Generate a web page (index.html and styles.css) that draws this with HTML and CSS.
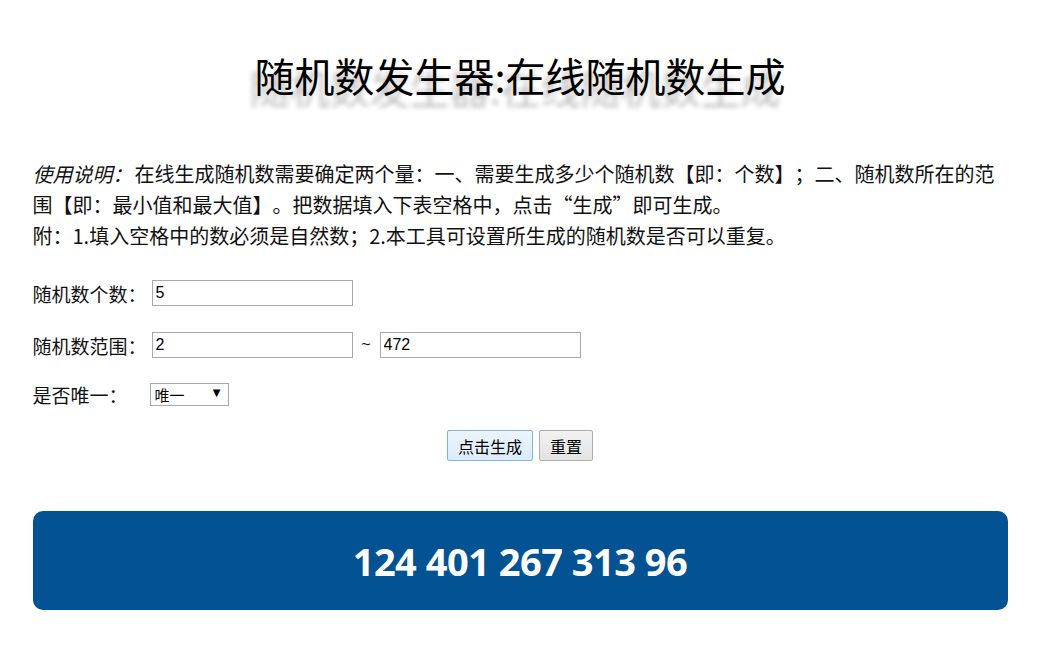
FILE: index.html
```html
<!DOCTYPE html>
<html lang="zh-CN">
<head>
  <meta charset="UTF-8">
  <title>随机数发生器:在线随机数生成</title>
  <link rel="stylesheet" href="styles.css">
</head>
<body>
  <div class="wrap">
    <h1>随机数发生器:在线随机数生成</h1>

    <p class="intro">
      <em>使用说明：</em>在线生成随机数需要确定两个量：一、需要生成多少个随机数【即：个数】；二、随机数所在的范围【即：最小值和最大值】。把数据填入下表空格中，点击“生成”即可生成。<br>
      附：1.填入空格中的数必须是自然数；2.本工具可设置所生成的随机数是否可以重复。
    </p>

    <div class="row row-count">
      <label for="count">随机数个数：</label>
      <input type="text" id="count" value="5">
    </div>
    <div class="row row-range">
      <label for="min">随机数范围：</label>
      <input type="text" id="min" value="2">
      <span class="tilde">~</span>
      <input type="text" id="max" value="472">
    </div>
    <div class="row row-unique">
      <label for="unique">是否唯一：</label>
      <span class="select-box">
        <select id="unique">
          <option>唯一</option>
          <option>不唯一</option>
        </select>
      </span>
    </div>

    <div class="actions">
      <button class="btn btn-primary">点击生成</button>
      <button class="btn">重置</button>
    </div>

    <div class="result">124 401 267 313 96</div>
  </div>
</body>
</html>
```

FILE: styles.css
```css
body { margin: 0; background: #fff; color: #111; font-family: "Noto Sans CJK SC", "Noto Sans", sans-serif; text-spacing-trim: space-all; }
.wrap { width: 975px; margin: 0 auto; padding-top: 46px; }
h1 { margin: 0; font-size: 40px; font-weight: normal; line-height: 58px; text-align: center; color: #000; text-shadow: -5px 12px 5px #bdbdbd; }
.intro { margin: 54px 0 0; font-size: 20px; line-height: 31px; }
.intro em { font-style: italic; padding-right: 2px; }
.row { display: flex; align-items: center; height: 26px; font-size: 19px; }
.row-count { margin-top: 29px; }
.row-range { margin-top: 26px; }
.row-unique { margin-top: 23px; }
.row label { width: 119px; flex-shrink: 0; white-space: nowrap; }
.row input { width: 201px; height: 26px; box-sizing: border-box; border: 1px solid #a9a9a9; padding: 0 3px; font: 16px "Liberation Sans", Arial, sans-serif; color: #000; }
.tilde { width: 27px; text-align: center; font: 16px "Liberation Sans", Arial, sans-serif; }
.select-box { position: relative; margin-left: -2px; }
.select-box select { display: block; width: 79px; height: 23px; appearance: none; border: 1px solid #a9a9a9; border-radius: 0; background: #fff; padding: 0 4px; font-size: 15px; font-family: "Noto Sans CJK SC", sans-serif; color: #000; }
.select-box::after { content: "\25BC"; position: absolute; right: 8px; top: 4px; font: 10px "DejaVu Sans", sans-serif; color: #000; pointer-events: none; }
.actions { display: flex; justify-content: center; gap: 6px; margin-top: 23px; }
.btn { height: 31px; padding: 0 10px; font-size: 16px; font-family: "Noto Sans CJK SC", sans-serif; color: #000; border: 1px solid #adadad; border-radius: 2px; background: linear-gradient(#f2f2f2, #e3e3e3); }
.btn-primary { border-color: #7eb4ea; background: linear-gradient(#ecf4fc, #dcecfc); }
.result { margin-top: 50px; height: 99px; border-radius: 10px; background: #035293; color: #fff; font: bold 38px "Open Sans", sans-serif; display: flex; align-items: center; justify-content: center; letter-spacing: -0.5px; }
```
